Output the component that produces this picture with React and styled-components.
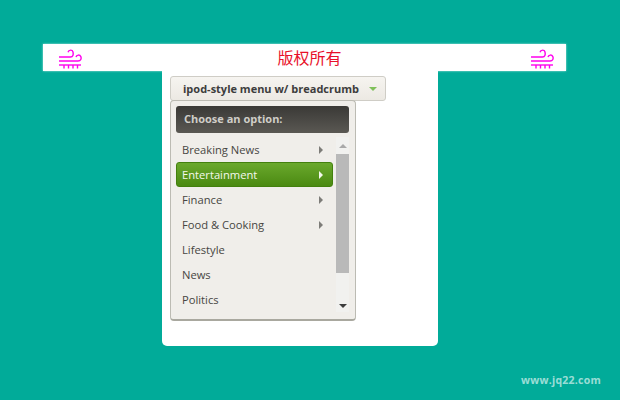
import React from 'react';
import styled, { createGlobalStyle } from 'styled-components';

const Global = createGlobalStyle`
    html, body {
        margin: 0;
        padding: 0;
        background: #01ab99;
    }
    body {
        width: 620px;
        height: 400px;
        overflow: hidden;
        position: relative;
        font-family: 'Open Sans', 'Noto Sans CJK SC', sans-serif;
    }
`;

const Page = styled.div`
    display: flex;
    flex-direction: column;
    align-items: flex-start;
    padding-top: 44px;
`;

const Banner = styled.div`
    display: flex;
    align-items: center;
    justify-content: space-between;
    box-sizing: border-box;
    width: 523px;
    height: 27px;
    margin-left: 43px;
    padding: 0 12px 0 15px;
    background: #fff;
    box-shadow: 0 0 2px rgba(255, 255, 255, 0.7);
`;

const Copyright = styled.span`
    margin-left: 7px;
    color: #e8102a;
    font-size: 16px;
    line-height: 27px;
    font-family: 'Noto Sans CJK SC', sans-serif;
`;

const Panel = styled.div`
    box-sizing: border-box;
    width: 276px;
    height: 275px;
    margin-left: 162px;
    padding: 5px 0 0 8px;
    background: #fff;
    border-radius: 0 0 5px 5px;
`;

const Trigger = styled.div`
    display: flex;
    align-items: center;
    justify-content: space-between;
    box-sizing: border-box;
    width: 216px;
    height: 25px;
    padding: 0 8px 0 12px;
    background: linear-gradient(#f6f4f0, #ece9e3);
    border: 1px solid #cfcdc6;
    border-radius: 3px;
    color: #3d3d3d;
    font-size: 11px;
    font-weight: 700;
    white-space: nowrap;
`;

const Caret = styled.span`
    width: 0;
    height: 0;
    border-left: 4px solid transparent;
    border-right: 4px solid transparent;
    border-top: 4px solid #7fc05a;
`;

const Dropdown = styled.div`
    box-sizing: border-box;
    width: 186px;
    height: 221px;
    margin-top: -1px;
    padding: 5px 6px 5px 5px;
    background: #f0eeea;
    border: 1px solid #bcbbb3;
    border-bottom: 2px solid #a9a89f;
    border-radius: 4px;
`;

const Title = styled.div`
    box-sizing: border-box;
    height: 27px;
    padding-left: 8px;
    background: linear-gradient(#3a3936, #5a5853);
    border-radius: 3px;
    color: #d0cec8;
    font-size: 11px;
    font-weight: 700;
    line-height: 26px;
`;

const Body = styled.div`
    display: flex;
    justify-content: space-between;
    margin-top: 4px;
`;

const List = styled.ul`
    list-style: none;
    width: 157px;
    margin: 0;
    padding: 0;
`;

const Item = styled.li`
    display: flex;
    align-items: center;
    justify-content: space-between;
    box-sizing: border-box;
    height: 25px;
    padding: 0 9px 0 5px;
    color: ${props => (props.$active ? '#f4f8ec' : '#474642')};
    font-size: 11.2px;
    background: ${props => (props.$active ? 'linear-gradient(#6aa82c, #4b8a12)' : 'transparent')};
    border: ${props => (props.$active ? '1px solid #43800e' : '1px solid transparent')};
    border-radius: 3px;
`;

const Arrow = styled.span`
    width: 0;
    height: 0;
    border-top: 4px solid transparent;
    border-bottom: 4px solid transparent;
    border-left: 4px solid ${props => (props.$active ? '#f4f8ec' : '#7d7c78')};
`;

const Scrollbar = styled.div`
    display: flex;
    flex-direction: column;
    align-items: center;
    width: 13px;
    height: 175px;
    background: #f1f1ef;
`;

const ScrollButton = styled.span`
    flex: none;
    width: 0;
    height: 0;
    margin: ${props => (props.$down ? 'auto 0 4px' : '7px 0 6px')};
    border-left: 4px solid transparent;
    border-right: 4px solid transparent;
    ${props => (props.$down ? 'border-top: 4px solid #3c3c3c;' : 'border-bottom: 4px solid #a9a9a9;')}
`;

const Thumb = styled.div`
    flex: none;
    width: 13px;
    height: 119px;
    background: #b9b9b9;
`;

const Watermark = styled.div`
    position: absolute;
    right: 19px;
    bottom: 13px;
    color: rgba(255, 255, 255, 0.62);
    font-family: 'Open Sans', sans-serif;
    font-size: 10.5px;
    font-weight: 700;
    letter-spacing: 0.25px;
`;

const Wind = () => (
    <svg width="24" height="24" viewBox="0 0 24 24" fill="none" stroke="#ff00ee" strokeWidth="1.4">
        <path d="M1 11H12.5C15 11 15.6 8.6 15 6C14.4 3.6 10.8 3.4 10 6.2" />
        <path d="M1 15H20C23 15 23.6 12.4 22.8 10.6C21.8 8.4 18.6 8.6 18 11" />
        <path d="M1 19H23" />
        <path d="M6 19V22.5M10.5 19V22.5M15 19V22.5M19.5 19V22.5" />
    </svg>
);

const items = [
    { label: 'Breaking News', more: true },
    { label: 'Entertainment', more: true, active: true },
    { label: 'Finance', more: true },
    { label: 'Food & Cooking', more: true },
    { label: 'Lifestyle' },
    { label: 'News' },
    { label: 'Politics' },
];

export default function App() {
    return (
        <>
            <Global />
            <Page>
                <Banner>
                    <Wind />
                    <Copyright>版权所有</Copyright>
                    <Wind />
                </Banner>
                <Panel>
                    <Trigger>
                        ipod-style menu w/ breadcrumb
                        <Caret />
                    </Trigger>
                    <Dropdown>
                        <Title>Choose an option:</Title>
                        <Body>
                            <List>
                                {items.map(item => (
                                    <Item key={item.label} $active={item.active}>
                                        {item.label}
                                        {item.more && <Arrow $active={item.active} />}
                                    </Item>
                                ))}
                            </List>
                            <Scrollbar>
                                <ScrollButton />
                                <Thumb />
                                <ScrollButton $down />
                            </Scrollbar>
                        </Body>
                    </Dropdown>
                </Panel>
            </Page>
            <Watermark>www.jq22.com</Watermark>
        </>
    );
}
